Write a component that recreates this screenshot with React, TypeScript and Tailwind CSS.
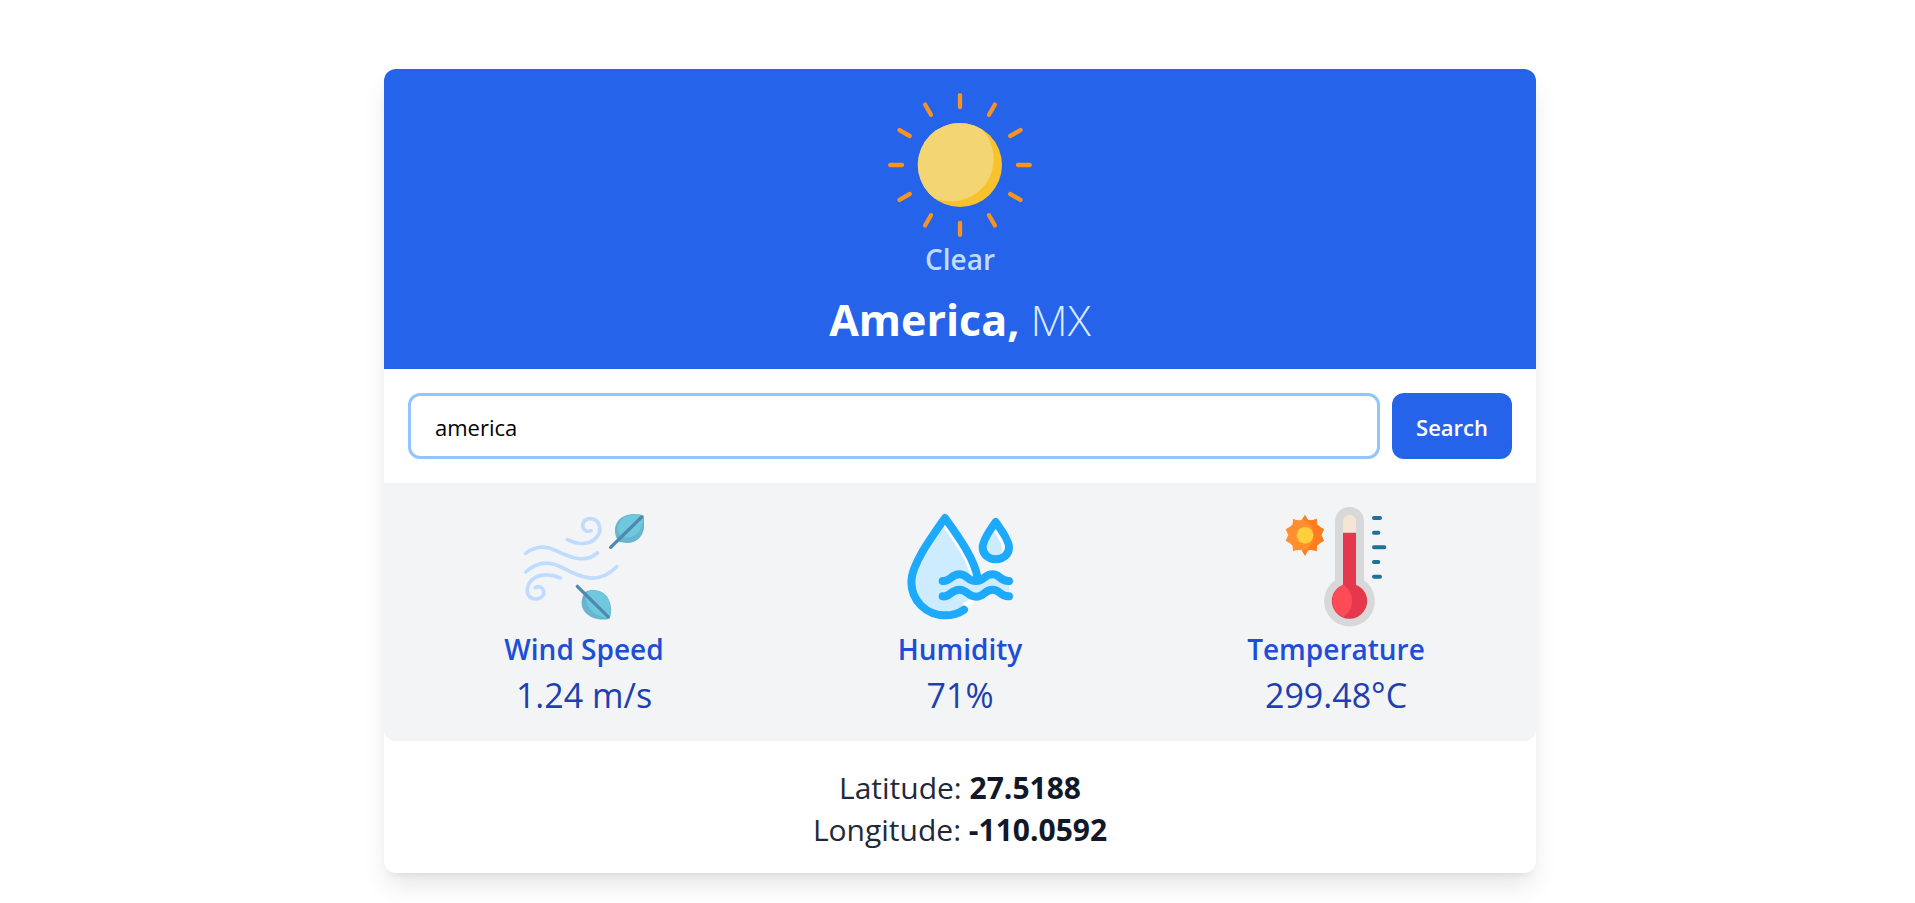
import { useState, type ReactNode } from "react";

const RAY_ANGLES = [0, 30, 60, 90, 120, 150, 180, 210, 240, 270, 300, 330];

function SunIcon() {
  return (
    <svg viewBox="84 99 432 432" className="size-36" aria-hidden="true">
      <circle cx="300" cy="315" r="126" fill="#f7c22d" />
      <path
        d="M363 206A126 126 0 0 0 223 415C238 421 254 424 274 424C344 424 401 368 401 298C401 262 388 230 363 206Z"
        fill="#f4d573"
      />
      <g stroke="#f7931e" strokeWidth="13" strokeLinecap="round">
        {RAY_ANGLES.map((angle) => (
          <path key={angle} d="M300 105.500V141" transform={`rotate(${angle} 300 315)`} />
        ))}
      </g>
    </svg>
  );
}

function WindIcon() {
  return (
    <svg viewBox="72 21 360 360" className="size-30" aria-hidden="true" fill="none">
      <g stroke="#bfdbfe" strokeWidth="11" strokeLinecap="round">
        <path d="M77 160C105 138 137 136 168 152C212 174 256 190 292 159" />
        <path d="M77 216C110 186 148 182 187 203C242 233 295 256 350 200" />
        <path d="M202 119C237 137 273 134 292 109C309 84 294 56 271 56C253 56 245 71 249 83C253 93 264 96 273 92" />
        <path d="M181 234C146 218 105 222 88 249C74 275 85 297 108 297C129 296 137 279 128 267C121 258 111 258 106 263" />
      </g>
      <g>
        <path d="M430 46C401 38 370 43 354 63C341 80 342 105 355 124C376 133 405 131 420 112C435 94 435 68 430 46Z" fill="#67b5cf" />
        <path d="M428 46C402 40 374 45 360 65C347 84 352 103 370 108C386 118 406 110 419 91C429 76 431 59 428 46Z" fill="#70c8dc" />
        <path d="M332 142L425 51" stroke="#4f88b3" strokeWidth="10" strokeLinecap="round" />
      </g>
      <g>
        <path d="M329 356C300 363 270 355 254 335C240 317 243 293 256 275C276 265 305 270 320 288C334 307 337 333 329 356Z" fill="#67b5cf" />
        <path d="M327 355C305 352 281 342 270 327C256 308 255 291 263 275C282 267 306 272 319 289C332 308 334 332 327 355Z" fill="#70c8dc" />
        <path d="M232 259L324 350" stroke="#4f88b3" strokeWidth="10" strokeLinecap="round" />
      </g>
    </svg>
  );
}

function HumidityIcon() {
  return (
    <svg
      viewBox="60 21 360 360"
      className="size-30"
      aria-hidden="true"
      fill="none"
      strokeLinecap="round"
      strokeLinejoin="round"
    >
      <path
        d="M195 54C148 120 94 196 94 245C94 303 140 346 195 346C238 346 279 318 290 277C290 208 234 108 195 54Z"
        fill="#cdecff"
      />
      <path d="M195 62L191 84C225 130 262 182 274 236L292 232C282 174 232 104 195 62Z" fill="#fff" />
      <path d="M252 328L247 312C260 304 270 296 277 290L290 296C280 312 268 324 252 328Z" fill="#fff" />
      <path
        d="M188 243C211 246 212 223 238 223C262 223 262 243 288 243C314 243 312 223 338 223C360 223 362 245 387 243V290C362 291 360 269 338 269C312 269 314 290 288 290C262 290 262 269 238 269C212 269 211 291 188 289Z"
        fill="#cdecff"
      />
      <path d="M347 66C331 88 308 121 308 142C308 164 326 178 347 178C369 178 387 164 387 142C387 121 363 88 347 66Z" fill="#cdecff" />
      <path d="M347 76L343 96C356 115 366 132 366 146C366 156 362 164 355 170C373 171 384 158 384 142C384 124 362 94 347 76Z" fill="#fff" />
      <g stroke="#1eaafc" strokeWidth="24">
        <path d="M252 329C235 341 215 346 195 346C140 346 94 303 94 245C94 196 148 120 195 54C235 109 286 181 293 236" />
        <path d="M347 66C331 88 308 121 308 142C308 164 326 178 347 178C369 178 387 164 387 142C387 121 363 88 347 66Z" />
        <path d="M188 243C211 246 212 223 238 223C262 223 262 243 288 243C314 243 312 223 338 223C360 223 362 245 387 243" />
        <path d="M188 289C211 292 212 269 238 269C262 269 262 290 288 290C314 290 312 269 338 269C360 269 362 291 387 289" />
      </g>
    </svg>
  );
}

function TemperatureIcon() {
  return (
    <svg viewBox="108 21 360 360" className="size-30" aria-hidden="true">
      <path
        d="M285 64A43.500 43.500 0 0 1 372 64V241A76 76 0 1 1 285 241Z"
        fill="#d8d8d8"
      />
      <path d="M309 64A19.500 19.500 0 0 1 348 64V110H309Z" fill="#f5e6d3" />
      <path d="M309 98H348V254A53 53 0 1 1 309 254Z" fill="#e5384f" />
      <path d="M309 254C319 259 336 276 336 303C336 329 321 344 309 351A53 53 0 0 1 309 254Z" fill="#ff4b55" />
      <path
        d="M195 45L204 60Q216 62 230 56L231 73Q239 82 252 88L244 105L252 122Q239 128 231 137L230 154Q216 148 204 151L195 167L185 151Q172 148 159 154L158 137Q150 128 137 122L145 105L137 88Q150 82 158 73L159 56Q172 62 185 60Z"
        fill="#ff8f2e"
      />
      <path
        d="M195 45L204 60Q216 62 230 56L231 73Q239 82 252 88L244 105L252 122Q239 128 231 137L230 154Q216 148 204 151L195 167L187 154C208 146 221 127 221 105C221 83 208 66 187 58Z"
        fill="#ff7d1f"
      />
      <circle cx="195" cy="106" r="25" fill="#ffd03b" />
      <g stroke="#1c7299" strokeWidth="12" strokeLinecap="round">
        <path d="M402 54H420M402 98H415M402 142H433M402 186H415M402 230H420" />
      </g>
    </svg>
  );
}

function Stat({ icon, label, value }: { icon: ReactNode; label: string; value: string }) {
  return (
    <div className="flex flex-col items-center">
      {icon}
      <h2 className="text-[28px] leading-[44px] font-semibold text-[#1d4ed8]">{label}</h2>
      <p className="text-[34px] leading-[48px] text-[#1e40af]">{value}</p>
    </div>
  );
}

export default function App() {
  const [query, setQuery] = useState("america");

  return (
    <div className="bg-white pt-[69px] pb-[30px] pl-[5px] font-['Open_Sans','Noto_Sans',sans-serif]">
      <main className="mx-auto max-w-6xl rounded-xl bg-white shadow-[0_15px_26px_-3px_rgba(0,0,0,0.1),0_6px_9px_-6px_rgba(0,0,0,0.1)]">
        <header className="flex flex-col items-center rounded-t-xl bg-[#2563eb] px-6 pt-6 pb-[22px]">
          <SunIcon />
          <p className="text-[28px] leading-[44px] font-semibold text-[#bfdbfe]">Clear</p>
          <h1 className="mt-3 text-[43px] leading-[54px] font-bold text-white">
            America, <span className="font-light text-[#dbeafe]">MX</span>
          </h1>
        </header>

        <form className="flex gap-3 p-6" onSubmit={(event) => event.preventDefault()}>
          <input
            type="text"
            aria-label="City"
            value={query}
            onChange={(event) => setQuery(event.target.value)}
            className="h-[66px] min-w-0 flex-1 rounded-xl border-3 border-[#93c5fd] px-6 pt-0.5 text-[22px] text-black outline-none"
          />
          <button
            type="submit"
            className="rounded-xl bg-[#2563eb] px-6 pt-0.5 text-[22px] font-semibold text-white"
          >
            Search
          </button>
        </form>

        <section className="grid grid-cols-3 gap-6 rounded-b-xl bg-[#f3f4f6] px-6 pt-6 pb-[22px]">
          <Stat icon={<WindIcon />} label="Wind Speed" value="1.24 m/s" />
          <Stat icon={<HumidityIcon />} label="Humidity" value="71%" />
          <Stat icon={<TemperatureIcon />} label="Temperature" value="299.48°C" />
        </section>

        <footer className="px-6 pt-[26px] pb-[22px] text-center text-[30px] leading-[42px] text-[#1f2937]">
          <p>
            Latitude: <span className="font-bold text-[#111827]">27.5188</span>
          </p>
          <p>
            Longitude: <span className="font-bold text-[#111827]">-110.0592</span>
          </p>
        </footer>
      </main>
    </div>
  );
}
